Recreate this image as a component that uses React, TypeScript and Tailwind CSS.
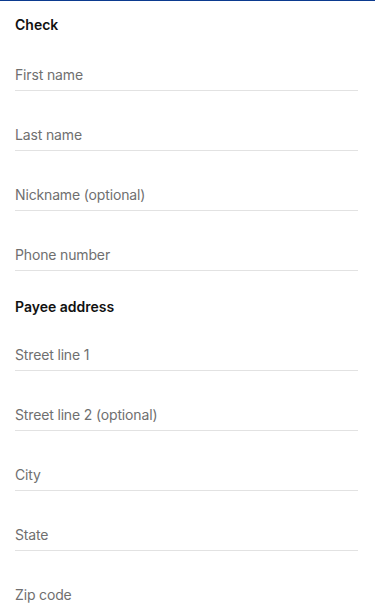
const checkFields = ['First name', 'Last name', 'Nickname (optional)', 'Phone number'];
const addressFields = ['Street line 1', 'Street line 2 (optional)', 'City', 'State', 'Zip code'];

function SectionTitle({ title, className }: { title: string; className: string }) {
  return (
    <div className={className}>
      <h2 className="text-[14px] leading-4 font-semibold text-[#111111]">{title}</h2>
    </div>
  );
}

function Field({ label }: { label: string }) {
  return (
    <label className="block border-b border-[#e2e2e2] pt-[34px] pb-[5px]">
      <input
        type="text"
        placeholder={label}
        className="block w-full bg-transparent text-[14px] leading-5 tracking-[-0.15px] text-[#111111] placeholder:text-[#6f6f6f] outline-none"
      />
    </label>
  );
}

export default function App() {
  return (
    <div
      className="min-h-screen border-t border-[#0b3a8f] bg-white pl-[15px] pr-[17px]"
      style={{ fontFamily: 'Inter, "Noto Sans", sans-serif' }}
    >
      <SectionTitle title="Check" className="h-[30px] pt-[16px]" />
      {checkFields.map((f) => (
        <Field key={f} label={f} />
      ))}
      <SectionTitle title="Payee address" className="h-[40px] pt-[28px]" />
      {addressFields.map((f) => (
        <Field key={f} label={f} />
      ))}
    </div>
  );
}
